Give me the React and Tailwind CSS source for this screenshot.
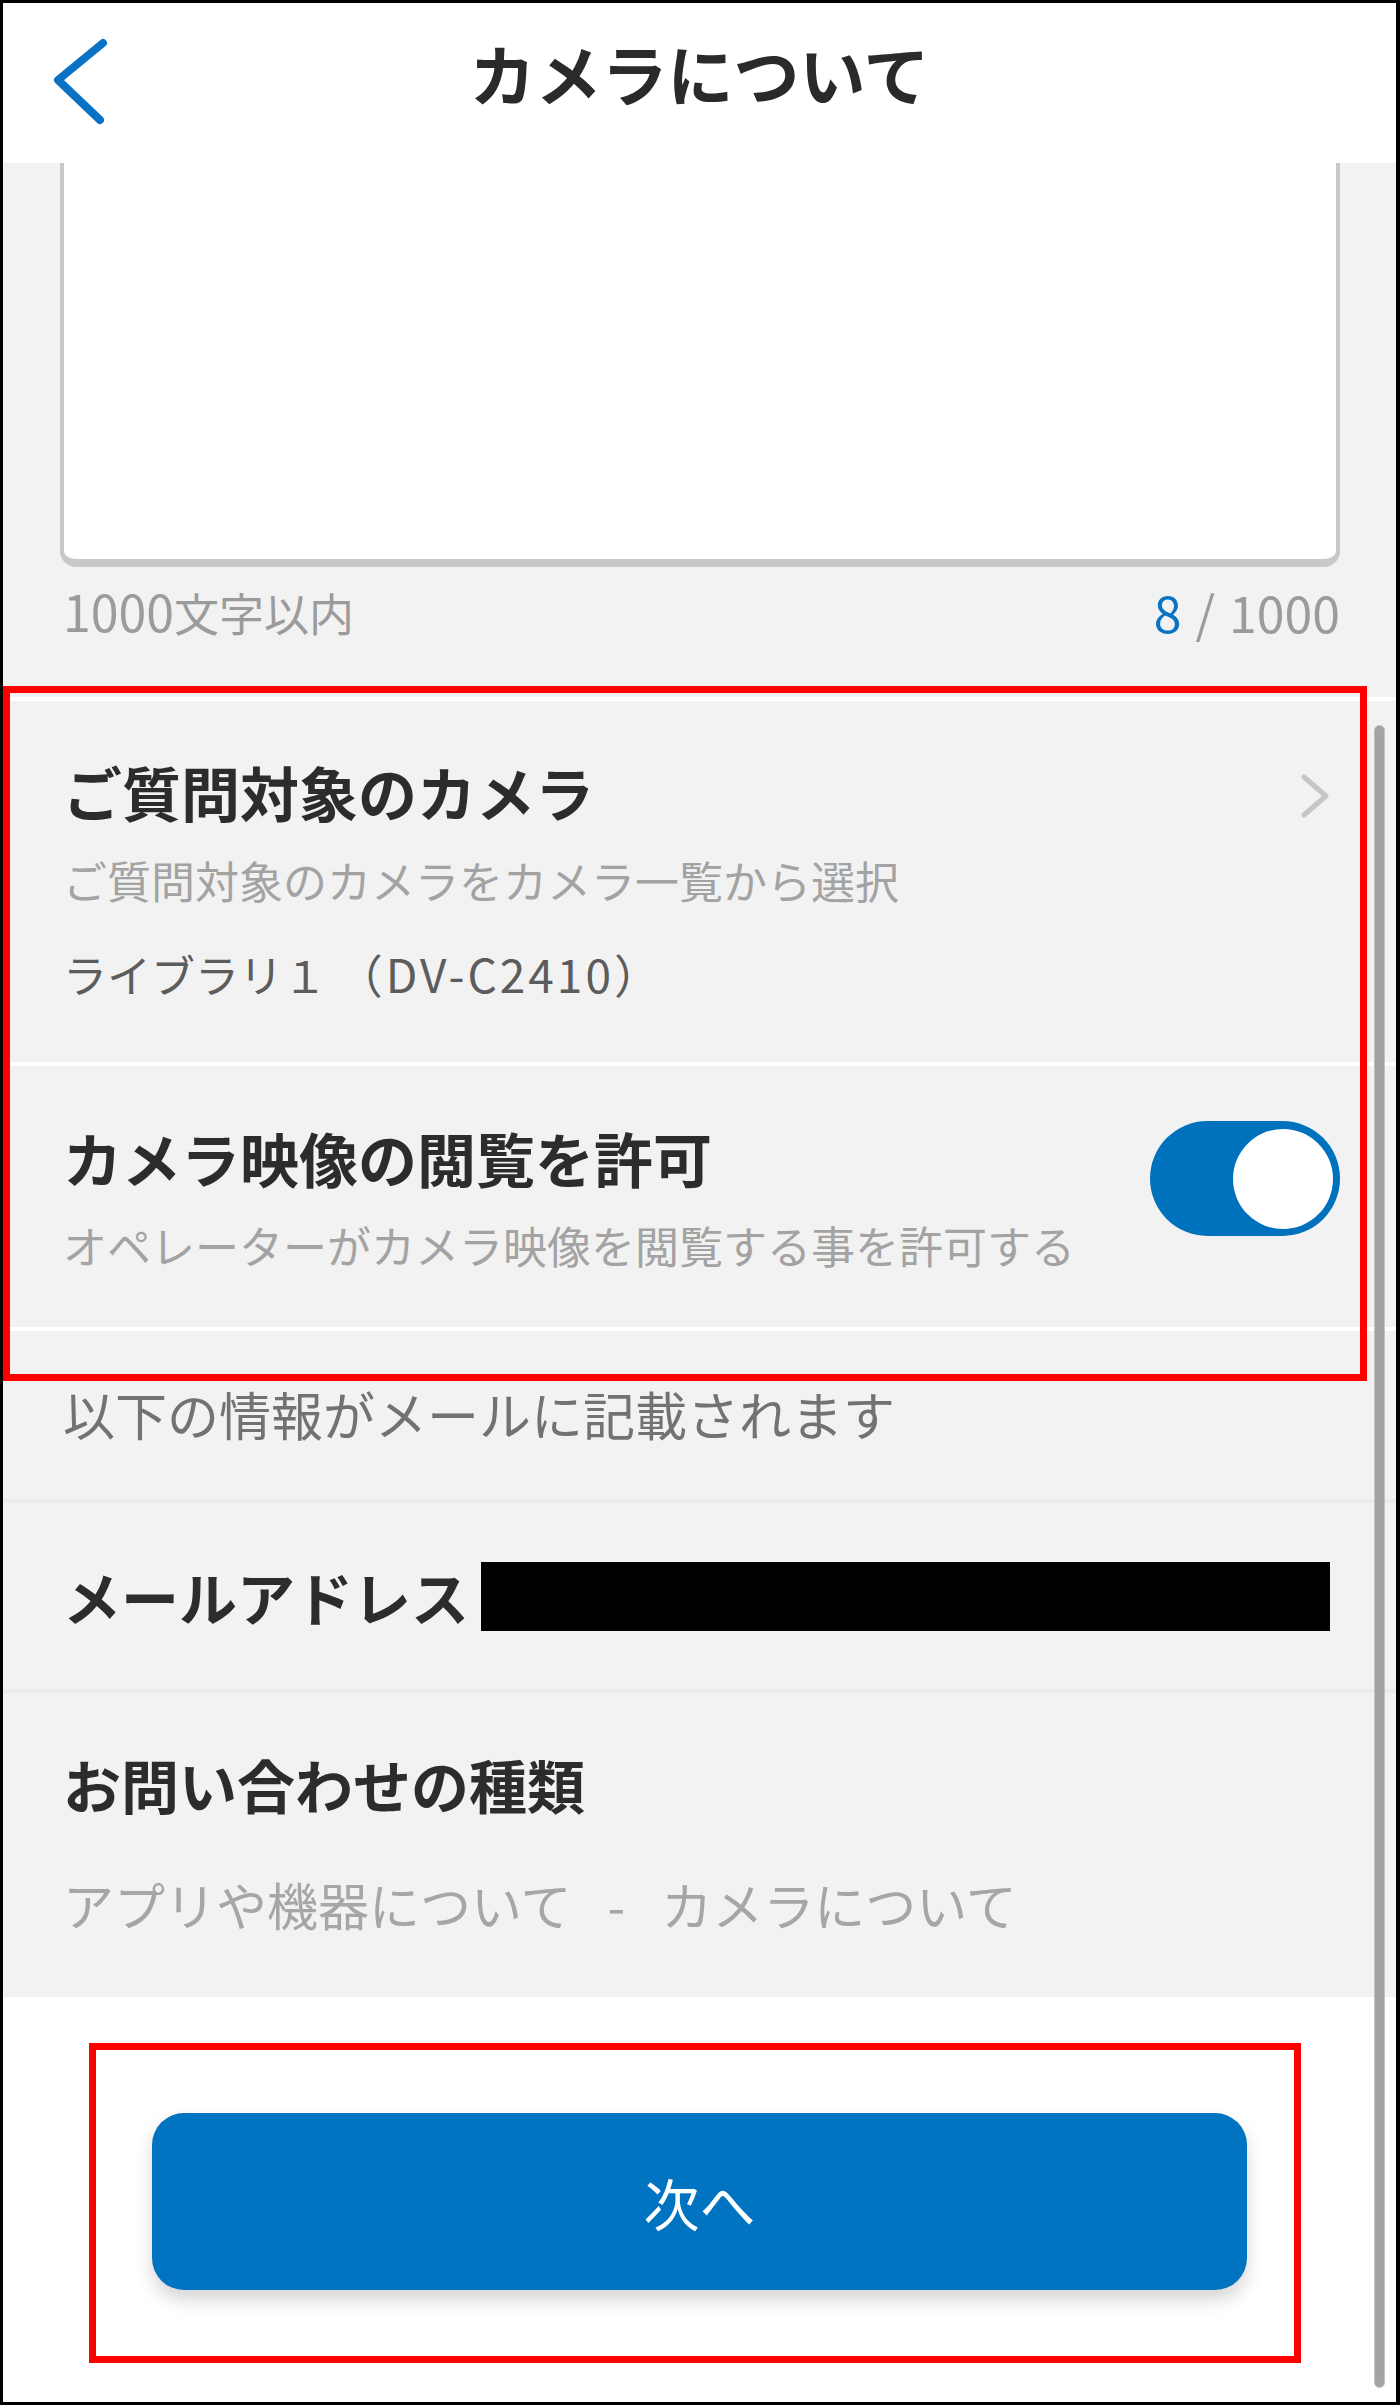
import React from "react";

const BackIcon = () => (
  <svg width="60" height="90" viewBox="0 0 60 90" className="ml-[47px]">
    <polyline
      points="53,5 8,42 50,82"
      fill="none"
      stroke="#0a72c4"
      strokeWidth="8"
      strokeLinecap="round"
      strokeLinejoin="round"
    />
  </svg>
);

const ChevronRight = () => (
  <svg width="30" height="46" viewBox="0 0 30 46" className="mt-[72px] mr-[66px] shrink-0">
    <polyline
      points="4,4 26,23 4,42"
      fill="none"
      stroke="#c6c6c6"
      strokeWidth="5"
      strokeLinecap="round"
      strokeLinejoin="round"
    />
  </svg>
);

const Toggle = () => (
  <div className="mt-[55px] mr-[56px] w-[190px] h-[115px] rounded-full bg-[#0072bd] flex items-center justify-end pr-[7px] shrink-0">
    <div className="w-[100px] h-[100px] rounded-full bg-white" />
  </div>
);

export default function App() {
  return (
    <div className="relative w-[1400px] h-[2405px] overflow-hidden border-l-[3px] border-t-[3px] border-r-[4px] border-b-[3px] border-black bg-white flex flex-col font-['Noto_Sans_CJK_JP',sans-serif]">
      {/* header */}
      <header className="h-[160px] shrink-0 bg-white grid grid-cols-[1fr_auto_1fr] items-center">
        <BackIcon />
        <h1 className="text-[66px] font-bold leading-none text-[#2a2a2a] pb-[22px]">カメラについて</h1>
        <div />
      </header>

      {/* form body */}
      <main className="shrink-0 bg-[#f2f2f2]">
        <div className="ml-[57px] mr-[56px] h-[404px] bg-white border-x-4 border-b-8 border-[#c8c8c8] rounded-b-[16px]" />
        <div className="ml-[60px] mr-[56px] mt-[16px] h-[56px] flex justify-between items-center text-[45px] leading-[56px] text-[#9b9b9b]">
          <span>
            <span className="text-[50px]">1000</span>文字以内
          </span>
          <span className="text-[50px]">
            <span className="text-[#0a74c4]">8</span>
            <span className="mx-[14px]">/</span>1000
          </span>
        </div>

        <div className="mt-[58px] h-[4px] bg-white" />

        <div className="flex justify-between">
          <div className="pl-[60px] pt-[56px] pb-[60px]">
            <div className="text-[59px] leading-[70px] font-bold text-[#2c2c2c]">ご質問対象のカメラ</div>
            <div className="mt-[25px] text-[44px] leading-[56px] text-[#a3a3a3]">ご質問対象のカメラをカメラ一覧から選択</div>
            <div className="mt-[37px] text-[44px] leading-[56px] text-[#5c5c5c]">
              ライブラリ１ <span className="text-[46px] tracking-[3px]">（DV-C2410）</span>
            </div>
          </div>
          <ChevronRight />
        </div>

        <div className="h-[4px] bg-white" />

        <div className="flex justify-between">
          <div className="pl-[60px] pt-[57px] pb-[54px]">
            <div className="text-[59px] leading-[70px] font-bold text-[#2c2c2c]">カメラ映像の閲覧を許可</div>
            <div className="mt-[24px] text-[44px] leading-[56px] text-[#a3a3a3]">オペレーターがカメラ映像を閲覧する事を許可する</div>
          </div>
          <Toggle />
        </div>

        <div className="h-[4px] bg-white" />

        <div className="pl-[60px] pt-[53px] pb-[55px] text-[52px] leading-[60px] text-[#727272]">
          以下の情報がメールに記載されます
        </div>

        <div className="h-[4px] bg-[#ebebeb]" />

        <div className="h-[186px] pl-[60px] flex items-center">
          <span className="text-[58px] leading-[70px] font-bold text-[#2c2c2c]">メールアドレス</span>
          <div className="ml-[12px] w-[849px] h-[69px] bg-black" />
        </div>

        <div className="h-[4px] bg-[#ebebeb]" />

        <div className="pl-[60px] pt-[56px] pb-[63px]">
          <div className="text-[58px] leading-[70px] font-bold text-[#2c2c2c]">お問い合わせの種類</div>
          <div className="mt-[55px] text-[51px] leading-[60px] text-[#a6a6a6]">
            アプリや機器について<span className="mx-[36px]">-</span>カメラについて
          </div>
        </div>
      </main>

      {/* footer button */}
      <div className="flex-1 bg-white flex justify-center">
        <button className="mt-[116px] w-[1095px] h-[177px] rounded-[32px] bg-[#0073c1] text-white text-[56px] leading-none shadow-[0_10px_18px_rgba(0,0,0,0.16)]">
          次へ
        </button>
      </div>

      {/* annotation boxes */}
      <div className="absolute left-0 top-[683px] w-[1364px] h-[695px] border-[7px] border-[#ff0000]" />
      <div className="absolute left-[86px] top-[2040px] w-[1212px] h-[320px] border-[7px] border-[#ff0000]" />

      {/* scrollbar */}
      <div className="absolute left-[1371px] top-[722px] w-[11px] h-[1663px] rounded-full bg-[#a3a3a3] border border-[#c2c2c2]" />
    </div>
  );
}
